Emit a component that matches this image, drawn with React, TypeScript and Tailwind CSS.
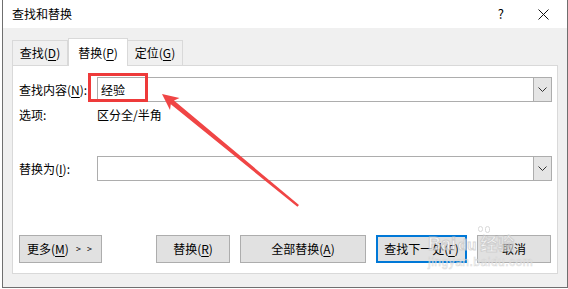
import React from 'react';

const font = { fontFamily: '"Noto Sans CJK SC", "Noto Sans", sans-serif' };

function Combo({ value }: { value?: string }) {
  return (
    <div className="flex h-[25px] w-[455px] items-center border border-[#adadad] bg-white">
      <div className="flex-1 pl-[3px] text-[12px] leading-none text-black">{value}</div>
      <div className="flex h-[23px] w-[18px] items-center justify-center border-l border-[#adadad] bg-[#e5e5e5]">
        <svg width="9" height="5" viewBox="0 0 9 5">
          <path d="M0.5 0.5 L4.5 4.5 L8.5 0.5" fill="none" stroke="#333" strokeWidth="1" />
        </svg>
      </div>
    </div>
  );
}

function Btn({ children, primary, className = '' }: { children: React.ReactNode; primary?: boolean; className?: string }) {
  return (
    <div
      className={`flex h-[28px] items-center bg-[#e1e1e1] text-[12px] text-black ${
        primary ? 'border-2 border-[#0078d7]' : 'border border-[#adadad]'
      } ${className}`}
    >
      {children}
    </div>
  );
}

export default function App() {
  return (
    <div className="relative h-[289px] w-[568px] overflow-hidden bg-white" style={font}>
      <div className="ml-[2px] flex h-[288px] w-[566px] flex-col border-x border-b border-[#6f6f6f]">
        {/* title bar */}
        <div className="flex h-[28px] items-center justify-between bg-white pl-[9px] pr-[18px]">
          <span className="text-[12px] text-black">查找和替换</span>
          <div className="flex items-center gap-[34px]">
            <span className="text-[13px] text-black">?</span>
            <svg width="11" height="11" viewBox="0 0 11 11">
              <path d="M0.5 0.5 L10.5 10.5 M10.5 0.5 L0.5 10.5" stroke="#111" strokeWidth="1" />
            </svg>
          </div>
        </div>

        {/* body */}
        <div className="flex flex-1 flex-col bg-[#f0f0f0] px-[9px] pb-[13px] pt-[10px]">
          {/* tabs */}
          <div className="relative z-10 flex h-[27px] items-end text-[12px] text-black">
            <div className="flex h-[25px] w-[56px] items-center justify-center border border-b-0 border-[#d9d9d9] bg-[#f0f0f0]">
              查找(<u className="underline-offset-2">D</u>)
            </div>
            <div className="-mb-px flex h-[28px] w-[60px] items-center justify-center border border-b-0 border-[#d9d9d9] bg-white">
              替换(<u className="underline-offset-2">P</u>)
            </div>
            <div className="flex h-[25px] w-[55px] items-center justify-center border border-b-0 border-l-0 border-[#d9d9d9] bg-[#f0f0f0]">
              定位(<u className="underline-offset-2">G</u>)
            </div>
          </div>

          {/* panel */}
          <div className="flex flex-1 flex-col border border-[#d9d9d9] bg-white pl-[6px] pt-[11px] text-[12px] text-black">
            <div className="flex items-center">
              <span className="w-[78px]">
                查找内容(<u className="underline-offset-2">N</u>):
              </span>
              <Combo value="经验" />
            </div>
            <div className="mt-[5px] flex h-[16px] items-center">
              <span className="w-[78px]">选项:</span>
              <span>区分全/半角</span>
            </div>
            <div className="mt-[33px] flex items-center">
              <span className="w-[78px]">
                替换为(<u className="underline-offset-2">I</u>):
              </span>
              <Combo />
            </div>
            <div className="mt-[54px] flex items-center">
              <Btn className="w-[83px] pl-[7px]">
                更多(<u className="underline-offset-2">M</u>)
                <span className="ml-[7px] text-[9px] tracking-[2px]">&gt; &gt;</span>
              </Btn>
              <Btn className="ml-[54px] w-[74px] justify-center">
                替换(<u className="underline-offset-2">R</u>)
              </Btn>
              <Btn className="ml-[10px] w-[126px] justify-center">
                全部替换(<u className="underline-offset-2">A</u>)
              </Btn>
              <Btn primary className="ml-[10px] w-[91px] justify-center">
                查找下一处(<u className="underline-offset-2">F</u>)
              </Btn>
              <Btn className="ml-[10px] w-[74px] justify-center">取消</Btn>
            </div>
          </div>
        </div>
      </div>

      {/* annotation: red box */}
      <div className="pointer-events-none absolute left-[88px] top-[73px] h-[29px] w-[60px] border-[3px] border-[#ee3a3a]" />

      {/* annotation: arrow */}
      <svg className="pointer-events-none absolute left-0 top-0" width="568" height="289" viewBox="0 0 568 289">
        <polygon
          points="162,94 179.5,98 174,100.5 299,205 297.4,206.8 170.8,104.3 170,110"
          fill="#f04545"
        />
      </svg>

      {/* watermark */}
      <div className="pointer-events-none absolute left-[428px] top-[226px] flex flex-col items-start text-white opacity-70">
        <div className="ml-[50px] flex gap-[2px]">
          <span className="h-[6px] w-[5px] rounded-full border border-[#c9c9c9]" />
          <span className="h-[7px] w-[5px] rounded-full border border-[#c9c9c9]" />
        </div>
        <div
          className="flex items-baseline text-[18px] font-bold leading-[20px]"
          style={{ WebkitTextStroke: '1px #c8c8c8', fontFamily: '"Liberation Sans", Arial, sans-serif' }}
        >
          <span>Bai</span>
          <span className="ml-[2px] text-[15px]">du</span>
          <span className="ml-[4px] text-[17px]" style={font}>经验</span>
        </div>
        <div
          className="text-[12px] leading-[14px] tracking-[0.5px]"
          style={{ WebkitTextStroke: '0.6px #cfcfcf', fontFamily: '"Liberation Sans", Arial, sans-serif' }}
        >
          jingyan.baidu.com
        </div>
      </div>
    </div>
  );
}
